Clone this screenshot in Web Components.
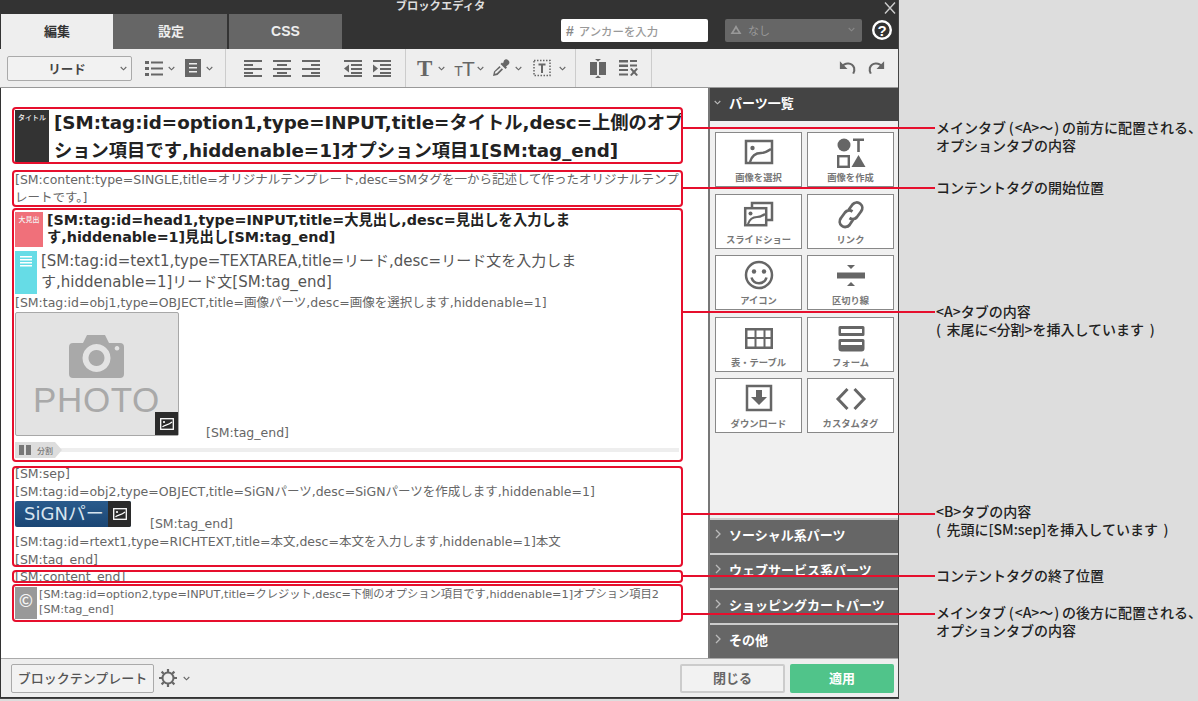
<!DOCTYPE html>
<html lang="ja">
<head>
<meta charset="utf-8">
<title>ブロックエディタ</title>
<style>
  html, body { margin: 0; height: 701px; overflow: hidden; background: #ddd; }
  body { font-family: "DejaVu Sans", "Noto Sans CJK JP", sans-serif; position: relative; }
</style>
</head>
<body>
<block-editor>
  <top-bar slot="top"></top-bar>
  <tool-bar slot="tools"></tool-bar>

  <editor-block slot="content" style="--top:19px;--h:57px">
    <tag-badge style="--w:34px;--h:53px;--bg:#333">タイトル</tag-badge>
    <div style="font:700 18.3px/28px 'DejaVu Sans','Noto Sans CJK JP',sans-serif;color:#222;margin:-1px 0 0 5px;white-space:nowrap">[SM:tag:id=option1,type=INPUT,title=タイトル,desc=上側のオプ<br>ション項目です,hiddenable=1]オプション項目1[SM:tag_end]</div>
  </editor-block>

  <editor-block slot="content" style="--top:6px;--h:37px">
    <div style="font-size:12.5px;line-height:18px;margin-top:-2px;color:#666;white-space:nowrap">[SM:content:type=SINGLE,title=オリジナルテンプレート,desc=SMタグを一から記述して作ったオリジナルテンプ<br>レートです。]</div>
  </editor-block>

  <editor-block slot="content" style="--top:1px;--h:254px">
    <div style="display:block;width:100%;margin-top:1px">
      <div style="display:flex;gap:4px">
        <tag-badge style="--w:28px;--h:35px;--bg:#f0707a">大見出</tag-badge>
        <div style="font:700 14.3px/17px 'DejaVu Sans','Noto Sans CJK JP',sans-serif;color:#222;white-space:nowrap">[SM:tag:id=head1,type=INPUT,title=大見出し,desc=見出しを入力しま<br>す,hiddenable=1]見出し[SM:tag_end]</div>
      </div>
      <div style="display:flex;gap:4px;margin-top:4px">
        <tag-badge style="--w:22px;--h:43px;--bg:#66dce6"><svg width="16" height="14" viewBox="0 0 16 14" fill="#fff"><path d="M2 1h12v1.4H2zM2 4h12v1.4H2zM2 7h12v1.4H2zM2 10h12v1.4H2z"/></svg></tag-badge>
        <div style="font-size:15px;line-height:21px;color:#555;white-space:nowrap">[SM:tag:id=text1,type=TEXTAREA,title=リード,desc=リード文を入力しま<br>す,hiddenable=1]リード文[SM:tag_end]</div>
      </div>
      <div style="font-size:12.5px;line-height:18px;color:#666;white-space:nowrap">[SM:tag:id=obj1,type=OBJECT,title=画像パーツ,desc=画像を選択します,hiddenable=1]</div>
      <div style="display:flex;align-items:flex-end">
        <photo-box></photo-box>
        <span style="font-size:12.5px;line-height:18px;color:#666;margin:0 0 -6px 27px">[SM:tag_end]</span>
      </div>
      <split-line></split-line>
    </div>
  </editor-block>

  <editor-block slot="content" style="--top:4px;--h:101px">
    <div style="display:block;width:100%;margin-top:-4px;font-size:12.5px;line-height:18px;color:#666;white-space:nowrap">
      <div>[SM:sep]</div>
      <div>[SM:tag:id=obj2,type=OBJECT,title=SiGNパーツ,desc=SiGNパーツを作成します,hiddenable=1]</div>
      <div style="display:flex;align-items:flex-end">
        <sign-chip></sign-chip>
        <span style="margin:0 0 -6px 19px">[SM:tag_end]</span>
      </div>
      <div style="margin-top:6px">[SM:tag:id=rtext1,type=RICHTEXT,title=本文,desc=本文を入力します,hiddenable=1]本文</div>
      <div>[SM:tag_end]</div>
    </div>
  </editor-block>

  <editor-block slot="content" style="--top:3px;--h:13px">
    <div style="font-size:12.5px;line-height:18px;margin-top:-5px;color:#666">[SM:content_end]</div>
  </editor-block>

  <editor-block slot="content" style="--top:1px;--h:38px">
    <tag-badge style="--w:22px;--h:32px;--bg:#999;--fs:17px;--al:flex-start">©</tag-badge>
    <div style="font-size:11.25px;line-height:15px;color:#666;margin-left:2px;white-space:nowrap">[SM:tag:id=option2,type=INPUT,title=クレジット,desc=下側のオプション項目です,hiddenable=1]オプション項目2<br>[SM:tag_end]</div>
  </editor-block>

  <parts-panel slot="side"></parts-panel>
  <foot-bar slot="foot"></foot-bar>
</block-editor>

<note-layer></note-layer>

<script>
// small helper so every component is just a style + markup string
function shadow(el, css, html) {
  el.attachShadow({ mode: 'open' }).innerHTML = `<style>${css}</style>${html}`;
}

const chev = (x = 0, color = '#666') => `<svg class="chev" width="7" height="5" viewBox="0 0 7 5" style="margin-left:${x}px"><path d="M.7 1l2.8 2.8L6.3 1" fill="none" stroke="${color}" stroke-width="1.1"/></svg>`;

// toolbar icons, 20x20 box
const bars = (rows) => rows.map(r => `<path d="M${r[0]} ${r[1]}h${r[2]}v2h-${r[2]}z"/>`).join('');
const toolIcons = {
  list: `<path d="M1 3h4v3H1zM1 9h4v3H1zM1 15h4v3H1z"/><path d="M7 3.5h12v2H7zM7 9.500h12v2H7zM7 15.500h12v2H7z"/>`,
  para: `<path fill-rule="evenodd" d="M2 1h16v18H2zM6 5v1.600h8V5zM6 9v1.600h8V9zM6 13v1.600h8V13z"/>`,
  left: bars([[0,2,18],[0,6,9],[0,10,18],[0,14,9],[0,17,18]]),
  center: bars([[0,2,18],[4,6,10],[0,10,18],[4,14,10],[0,17,18]]),
  right: bars([[0,2,18],[9,6,9],[0,10,18],[9,14,9],[0,17,18]]),
  outdent: bars([[0,2,18],[7,6,11],[7,10,11],[7,14,11],[0,17,18]]) + `<path d="M5 6.500v8L0 10.500z"/>`,
  indent: bars([[0,2,18],[7,6,11],[7,10,11],[7,14,11],[0,17,18]]) + `<path d="M0 6.500v8l5-4z"/>`,
  split: `<path d="M2 4h7v13H2zM11 4h7v13h-7z"/><path d="M7 1h6L10 3.400zM7 20h6l-3-2.400z"/>`,
  clear: `<path d="M1 2h9v2.600H1zM1 6.500h9v2.600H1zM1 11h9V13H1zM1 15.500h9v2H1zM12 2h7v2H12zM12 6.500h7v2H12z"/><path d="M12 11l1.600-1 2.400 2.600L18.400 10l1.600 1-2.600 3 2.600 3-1.600 1-2.400-2.600L13.600 18 12 17l2.600-3z"/>`
};
const ti = (name, w = 20) => `<svg width="${w}" height="20" viewBox="0 0 ${w} 20" fill="#666">${toolIcons[name]}</svg>`;

class BlockEditor extends HTMLElement {
  constructor() {
    super();
    shadow(this, `
      :host { display:block; width:898px; height:698px; background:#333; border-right:1px solid #444; border-bottom:1px solid #444; }
      .wrap { display:flex; flex-direction:column; height:100%; }
      .body { display:flex; height:570px; margin-left:1px; }
      .content { flex:none; width:707px; background:#fff; padding:0 0 0 11px; box-sizing:border-box; overflow:hidden; }
    `, `
      <div class="wrap">
        <slot name="top"></slot>
        <slot name="tools"></slot>
        <div class="body">
          <div class="content"><slot name="content"></slot></div>
          <slot name="side"></slot>
        </div>
        <slot name="foot"></slot>
      </div>`);
  }
}

class TopBar extends HTMLElement {
  constructor() {
    super();
    shadow(this, `
      :host { display:block; height:49px; background:#333; color:#fff; font-family:"Noto Sans CJK JP",sans-serif; }
      .title { height:14px; position:relative; text-align:center; font-size:11.3px; line-height:11px; font-weight:700; color:#ddd; padding-right:17px; }
      .close { position:absolute; right:1px; top:2px; }
      .row { display:flex; height:35px; padding-left:1px; }
      .tab { width:112px; display:flex; align-items:center; justify-content:center; background:#666; font:700 13px "Noto Sans CJK JP",sans-serif; color:#eee; padding-bottom:2px; box-sizing:border-box; }
      .tab.on { background:#eee; color:#333; }
      .tab.mid { width:114px; margin-right:2px; padding-left:2px; }
      .tab.css { width:113px; font-family:"Liberation Sans",sans-serif; font-size:14px; }
      .anchor { margin:5px 0 0 219px; width:147px; height:23px; box-sizing:border-box; background:#fff; border-radius:2px; color:#999; font-size:11.4px; font-weight:500; padding:0 5px; display:flex; align-items:center; gap:5px; }
      .anchor b { color:#888; font:700 14px "Liberation Sans",sans-serif; }
      .sel { margin:5px 0 0 17px; width:137px; height:23px; box-sizing:border-box; background:#666; border-radius:2px; color:#999; font-size:11px; display:flex; align-items:center; padding:0 7px 2px 3px; gap:4px; }
      .sel span { flex:1; }
      .help { margin:5px 0 0 9px; }
    `, `
      <div class="title">ブロックエディタ
        <svg class="close" width="14" height="12" viewBox="0 0 14 12"><path d="M2 .5l10 11M12 .5L2 11.500" stroke="#ccc" stroke-width="1.400" fill="none"/></svg>
      </div>
      <div class="row">
        <div class="tab on">編集</div><div class="tab mid">設定</div><div class="tab css">CSS</div>
        <div class="anchor"><b>#</b>アンカーを入力</div>
        <div class="sel">
          <svg width="16" height="14" viewBox="0 0 16 14" fill="#999"><path fill-rule="evenodd" d="M8 2l2 3.400 3.500 5.600h-11L6 5.400zM8 5.500L5.500 9.500h5z"/></svg><span>なし</span>
          ${chev(0, '#888')}
        </div>
        <svg class="help" width="22" height="22" viewBox="0 0 22 22"><circle cx="11" cy="11" r="8.800" fill="none" stroke="#fff" stroke-width="2.400"/><text x="11" y="16.500" text-anchor="middle" font-family="Liberation Sans" font-weight="700" font-size="15" fill="#fff">?</text></svg>
      </div>`);
  }
}

class ToolBar extends HTMLElement {
  constructor() {
    super();
    shadow(this, `
      :host { display:flex; align-items:center; height:38px; background:#eee; border-bottom:1px solid #999; padding-left:1px; }
      .grp { display:flex; align-items:center; height:100%; border-right:1px solid #ccc; box-sizing:border-box; }
      .style { width:125px; height:25px; box-sizing:border-box; border:1px solid #aaa; border-radius:2px; background:#f2f2f2; display:flex; align-items:center; font:700 12.5px "Noto Sans CJK JP",sans-serif; color:#444; }
      .style span { flex:1; text-align:center; padding-left:6px; }
      .style .chev { margin-right:4px; }
      svg { flex:none; display:block; }
      .T { font:700 23px "Liberation Serif",serif; color:#666; line-height:1; }
      .tT { font:400 21px "Liberation Sans",sans-serif; color:#666; line-height:1; letter-spacing:-1px; }
      .tT small { font-size:14px; }
      .end { margin-left:auto; padding:0 12px 2px 0; display:flex; gap:10px; }
    `, `
      <div class="grp" style="width:225px;padding-left:6px">
        <div class="style"><span>リード</span>${chev()}</div>
        <span style="margin-left:12px;display:flex;align-items:center">${ti('list')}${chev(4)}</span>
        <span style="margin-left:8px;display:flex;align-items:center">${ti('para', 19)}${chev(4)}</span>
      </div>
      <div class="grp" style="width:180px;padding-left:18px;gap:11px">
        ${ti('left', 18)}${ti('center', 18)}${ti('right', 18)}
        <span style="width:2px"></span>${ti('outdent', 18)}${ti('indent', 18)}
      </div>
      <div class="grp" style="width:170px;padding-left:11px">
        <span class="T">T</span>${chev(6)}
        <span class="tT" style="margin-left:9px"><small>T</small>T</span>${chev(3)}
        <svg style="margin-left:7px" width="20" height="20" viewBox="0 0 20 20" fill="#666"><path d="M13 2.500a3 3 0 0 1 4.500 4l-2.500 2 1 1-1.500 1.500-5-5L11 4.500l1 1z"/><path d="M8.500 8L3 13.500 2 18l4.500-1L12 11.500l-1.200-1.200L5.800 15.300l-2 .5.500-2L9.700 9.200z"/></svg>${chev(4)}
        <svg style="margin-left:10px" width="20" height="20" viewBox="0 0 20 20" fill="none"><rect x="2" y="2.500" width="16" height="15" stroke="#666" stroke-width="1.500" stroke-dasharray="1.500 1.500"/><path d="M6.500 5.500h7v2h-2.500v7.500H9V7.500H6.500z" fill="#666"/></svg>${chev(7)}
      </div>
      <div class="grp" style="width:76px;padding-left:12px;gap:10px">${ti('split')}${ti('clear')}</div>
      <div class="end">
        <svg width="19" height="20" viewBox="0 0 20 20" fill="none"><path d="M4 10C7 5 15 5 17 11c.7 2.500 0 4-1 6" stroke="#666" stroke-width="2.200"/><path d="M2 4v8h8z" fill="#666"/></svg>
        <svg width="19" height="20" viewBox="0 0 20 20" fill="none"><path d="M16 10C13 5 5 5 3 11c-.7 2.500 0 4 1 6" stroke="#666" stroke-width="2.200"/><path d="M18 4v8h-8z" fill="#666"/></svg>
      </div>`);
  }
}

// one red framed block of the editor, its height and gap come from custom properties
class EditorBlock extends HTMLElement {
  constructor() {
    super();
    shadow(this, `
      :host { display:flex; width:671px; height:var(--h); margin-top:var(--top); box-sizing:border-box; border:2px solid #e60f2d; border-radius:4px; padding:1px 1px 0 1px; overflow:hidden; }
    `, `<slot></slot>`);
  }
}

class TagBadge extends HTMLElement {
  constructor() {
    super();
    shadow(this, `
      :host { flex:none; display:flex; justify-content:center; align-items:var(--al,flex-start); width:var(--w); height:var(--h); background:var(--bg); color:#f4f4f4; font:500 var(--fs,7px)/1 "Noto Sans CJK JP",sans-serif; padding-top:4px; box-sizing:border-box; white-space:nowrap; }
    `, `<slot></slot>`);
  }
}

class PhotoBox extends HTMLElement {
  constructor() {
    super();
    shadow(this, `
      :host { flex:none; display:block; position:relative; width:164px; height:124px; box-sizing:border-box; background:#e3e3e3; border:1px solid #a8a8a8; border-radius:2px; }
      svg.cam { position:absolute; left:53px; top:21px; }
      .word { position:absolute; left:0; right:0; top:69px; text-align:center; font:400 35px/1 "Liberation Sans",sans-serif; letter-spacing:.6px; color:#a9a9a9; padding-right:1px; }
      .pick { position:absolute; right:0; bottom:0; width:23px; height:23px; background:#2b2b2b; display:flex; align-items:center; justify-content:center; }
    `, `
      <svg class="cam" width="56" height="46" viewBox="0 0 56 46"><path fill-rule="evenodd" fill="#a9a9a9" d="M4 9h10l4-8h18l4 8h11a4 4 0 0 1 4 4v27a4 4 0 0 1-4 4H4a4 4 0 0 1-4-4V13a4 4 0 0 1 4-4zM27.500 10a14 14 0 1 0 .01 0zM27.500 16a8 8 0 1 1-.01 0zM48 12a2.300 2.300 0 1 0 .01 0z"/></svg>
      <div class="word">PHOTO</div>
      <div class="pick">${pickIcon()}</div>`);
  }
}

function pickIcon() {
  return `<svg width="14" height="12" viewBox="0 0 14 12" fill="none"><rect x=".7" y=".7" width="12.600" height="10.600" stroke="#fff" stroke-width="1.300"/><circle cx="4" cy="4" r="1.100" fill="#fff"/><path d="M2.500 9C4 6.500 8 7.800 12 4" stroke="#fff" stroke-width="1.200"/></svg>`;
}

class SplitLine extends HTMLElement {
  constructor() {
    super();
    shadow(this, `
      :host { display:flex; align-items:center; height:16px; margin-top:6px; position:relative; }
      :host::after { content:""; position:absolute; left:40px; right:1px; top:6px; height:4px; background:#eee; }
      .tag { position:relative; z-index:1; display:flex; align-items:center; gap:5px; width:47px; height:16px; box-sizing:border-box; padding-left:3px; background:#ddd; clip-path:polygon(0 0,40px 0,47px 50%,40px 100%,0 100%); font:500 8px "Noto Sans CJK JP",sans-serif; color:#777; }
    `, `<div class="tag"><svg width="14" height="14" viewBox="0 0 14 14" fill="#777"><path d="M1 2h5v10H1zM8 2h5v10H8z"/></svg>分割</div>`);
  }
}

class SignChip extends HTMLElement {
  constructor() {
    super();
    shadow(this, `
      :host { flex:none; display:flex; width:116px; height:26px; border-radius:2px; overflow:hidden; background:linear-gradient(#2a5b8c,#1b4674); color:#d7e4ef; font:400 18px/25px "DejaVu Sans","Noto Sans CJK JP",sans-serif; }
      span { flex:1; min-width:0; padding-left:9px; overflow:hidden; white-space:nowrap; }
      .pick { flex:none; width:23px; background:#2b2b2b; display:flex; align-items:center; justify-content:center; }
    `, `<span>SiGNパー</span><div class="pick">${pickIcon()}</div>`);
  }
}

// icons of the parts panel, 34x34 box
const partIcons = {
  image: `<rect x="4" y="5" width="26" height="22" fill="none" stroke="#666" stroke-width="2.500"/><circle cx="10.500" cy="12" r="2.200" fill="#666"/><path d="M8 26c2-7 6-9 11-9 4 0 7-2 10-4" fill="none" stroke="#666" stroke-width="2.500"/>`,
  shapes: `<circle cx="10" cy="9" r="6.500" fill="#666"/><path d="M19 2.500h11v2.500h-4.200v11h-2.600V5H19z" fill="#666"/><rect x="4.200" y="20.200" width="10.600" height="10.600" fill="none" stroke="#666" stroke-width="2.400"/><path d="M24.500 19l7 12h-14z" fill="#666"/>`,
  slides: `<path d="M10 10V5h20v17h-6" fill="none" stroke="#666" stroke-width="2.500"/><rect x="3.200" y="10.200" width="21" height="17" fill="none" stroke="#666" stroke-width="2.500"/><circle cx="8.500" cy="15.500" r="2" fill="#666"/><path d="M6 26c2-6 6-7 9-7s5-1 8-3" fill="none" stroke="#666" stroke-width="2.200"/>`,
  link: `<path d="M14.500 12l4-5.500a5.500 5.500 0 0 1 8.500 7l-4 5.500a5.500 5.500 0 0 1-7.500 1M19.500 21l-4 6a5.500 5.500 0 0 1-8.500-7l4-5.500a5.500 5.500 0 0 1 7.500-1" fill="none" stroke="#666" stroke-width="2.800"/>`,
  smile: `<circle cx="17" cy="16" r="13" fill="none" stroke="#666" stroke-width="2.500"/><circle cx="12" cy="12.500" r="2.200" fill="#666"/><circle cx="22" cy="12.500" r="2.200" fill="#666"/><path d="M9.500 18.500c2 7.500 13 7.500 15 0" fill="none" stroke="#666" stroke-width="2.500"/>`,
  divider: `<path d="M13 6h8l-4 4zM13 27h8l-4-4z" fill="#666"/><rect x="3" y="13.500" width="28" height="6" fill="#666"/>`,
  table: `<path fill-rule="evenodd" fill="#666" d="M3 7h28v21H3zM5.500 9.500v6.500h7V9.500zM14.500 9.500v6.500h7V9.500zM23.500 9.500v6.500h5V9.500zM5.500 18v7.500h7V18zM14.500 18v7.500h7V18zM23.500 18v7.500h5V18z"/>`,
  form: `<path fill-rule="evenodd" fill="#666" d="M6 5h23a1.500 1.500 0 0 1 1.500 1.500v7a1.500 1.500 0 0 1-1.500 1.500H6a1.500 1.500 0 0 1-1.500-1.500v-7A1.500 1.500 0 0 1 6 5zM7 8v4h21V8zM6 18h23a1.500 1.500 0 0 1 1.500 1.500v8a3 3 0 0 1-3 3h-20a3 3 0 0 1-3-3v-8A1.500 1.500 0 0 1 6 18zM7 21v3h21v-3z"/>`,
  download: `<rect x="5" y="4" width="24" height="24" fill="none" stroke="#666" stroke-width="2.500"/><path d="M14 8h6v7h5l-8 8-8-8h5z" fill="#666"/>`,
  code: `<path d="M13.500 7L4 17l9.500 10M20.500 7L30 17l-9.500 10" fill="none" stroke="#666" stroke-width="3"/>`
};

class PartButton extends HTMLElement {
  static get observedAttributes() { return ['label', 'icon']; }
  constructor() {
    super();
    shadow(this, `
      :host { display:flex; flex-direction:column; align-items:center; box-sizing:border-box; height:55px; background:#fff; border:1px solid #888; font:700 9.3px/1 "Noto Sans CJK JP",sans-serif; color:#777; padding-top:3px; }
      svg { display:block; }
      span { margin-top:3px; white-space:nowrap; }
    `, `<svg width="34" height="34" viewBox="0 0 34 34"></svg><span></span>`);
  }
  attributeChangedCallback(name, oldValue, newValue) {
    if (name === 'label') this.shadowRoot.querySelector('span').textContent = newValue;
    if (name === 'icon') this.shadowRoot.querySelector('svg').innerHTML = partIcons[newValue];
  }
}

class PartsPanel extends HTMLElement {
  constructor() {
    super();
    const parts = [
      ['画像を選択', 'image'], ['画像を作成', 'shapes'], ['スライドショー', 'slides'], ['リンク', 'link'],
      ['アイコン', 'smile'], ['区切り線', 'divider'], ['表・テーブル', 'table'], ['フォーム', 'form'],
      ['ダウンロード', 'download'], ['カスタムタグ', 'code']
    ];
    const sections = ['ソーシャル系パーツ', 'ウェブサービス系パーツ', 'ショッピングカートパーツ', 'その他'];
    shadow(this, `
      :host { flex:none; display:flex; flex-direction:column; width:190px; height:570px; background:#f0f0f0; border-left:2px solid #777; box-sizing:border-box; font:700 13px "Noto Sans CJK JP",sans-serif; color:#fff; }
      .head { height:33px; flex:none; display:flex; align-items:center; gap:8px; background:#444; padding:0 0 5px 4px; box-sizing:border-box; }
      .grid { display:grid; grid-template-columns:87px 87px; gap:6.5px 5px; padding:11px 0 0 5px; flex:1; align-content:start; }
      .bar { flex:none; height:35px; box-sizing:border-box; display:flex; align-items:center; gap:8px; padding:0 0 5px 5px; background:#666; border-top:2px solid #ccc; overflow:hidden; white-space:nowrap; }
      .bar svg { flex:none; }
    `, `
      <div class="head">${chev(0, '#bbb')}パーツ一覧</div>
      <div class="grid">${parts.map(p => `<part-button label="${p[0]}" icon="${p[1]}"></part-button>`).join('')}</div>
      ${sections.map(s => `<div class="bar"><svg width="6" height="10" viewBox="0 0 6 10"><path d="M1 1l4 4-4 4" fill="none" stroke="#bbb" stroke-width="1.300"/></svg>${s}</div>`).join('')}`);
  }
}

class FootBar extends HTMLElement {
  constructor() {
    super();
    shadow(this, `
      :host { display:flex; align-items:center; height:39px; margin-left:1px; background:#eee; border-top:1px solid #aaa; box-sizing:border-box; padding-left:10px; font:700 13px "Noto Sans CJK JP",sans-serif; color:#666; }
      .tpl { width:143px; height:29px; box-sizing:border-box; border:1px solid #aaa; border-radius:2px; background:#f2f2f2; display:flex; align-items:center; justify-content:center; color:#555; font-weight:500; white-space:nowrap; padding-bottom:2px; }
      .gear { margin-left:4px; }
      .btn { height:29px; box-sizing:border-box; display:flex; align-items:center; justify-content:center; border-radius:2px; padding-bottom:2px; }
      .close { margin-left:auto; width:105px; border:2px solid #ccc; background:#f2f2f2; }
      .apply { margin:0 4px 0 5px; width:104px; background:#50c48a; color:#fff; }
    `, `
      <div class="tpl">ブロックテンプレート</div>
      <svg class="gear" width="20" height="20" viewBox="0 0 20 20" fill="none" stroke="#666"><circle cx="10" cy="10" r="5.500" stroke-width="2"/><path stroke-width="2.200" d="M10 1v3M10 16v3M1 10h3M16 10h3M3.600 3.600l2.200 2.200M14.200 14.200l2.200 2.200M16.400 3.600l-2.200 2.200M5.800 14.200l-2.200 2.200"/></svg>
      ${chev(5)}
      <div class="btn close">閉じる</div><div class="btn apply">適用</div>`);
  }
}

// the red leader lines and the captions on the grey area, laid over everything
class NoteLayer extends HTMLElement {
  constructor() {
    super();
    const notes = [
      [128, 118, 'メインタブ&#8201;(&#8202;&lt;A&gt;〜&#8202;)&#8201;の前方に配置される、<br>オプションタブの内容'],
      [188, 177.5, 'コンテントタグの開始位置'],
      [312, 302, '&lt;A&gt;タブの内容<br>(&#8201;&#8201;末尾に&lt;分割&gt;を挿入しています&#8201;&#8201;)'],
      [514, 502, '&lt;B&gt;タブの内容<br>(&#8201;&#8201;先頭に[SM:sep]を挿入しています&#8201;&#8201;)'],
      [576, 566, 'コンテントタグの終了位置'],
      [614, 603, 'メインタブ&#8201;(&#8202;&lt;A&gt;〜&#8202;)&#8201;の後方に配置される、<br>オプションタブの内容']
    ];
    shadow(this, `
      :host { position:absolute; left:0; top:0; width:1198px; height:701px; overflow:hidden; pointer-events:none; }
      .line { position:absolute; left:682px; width:253px; height:2px; background:#e60f2d; }
      .txt { position:absolute; left:936px; white-space:nowrap; font:500 14px/18px "Noto Sans CJK JP",sans-serif; color:#222; }
    `, notes.map(n => `<div class="line" style="top:${n[0] - 1}px"></div><div class="txt" style="top:${n[1]}px">${n[2]}</div>`).join(''));
  }
}

customElements.define('block-editor', BlockEditor);
customElements.define('top-bar', TopBar);
customElements.define('tool-bar', ToolBar);
customElements.define('editor-block', EditorBlock);
customElements.define('tag-badge', TagBadge);
customElements.define('photo-box', PhotoBox);
customElements.define('split-line', SplitLine);
customElements.define('sign-chip', SignChip);
customElements.define('part-button', PartButton);
customElements.define('parts-panel', PartsPanel);
customElements.define('foot-bar', FootBar);
customElements.define('note-layer', NoteLayer);
</script>
</body>
</html>
